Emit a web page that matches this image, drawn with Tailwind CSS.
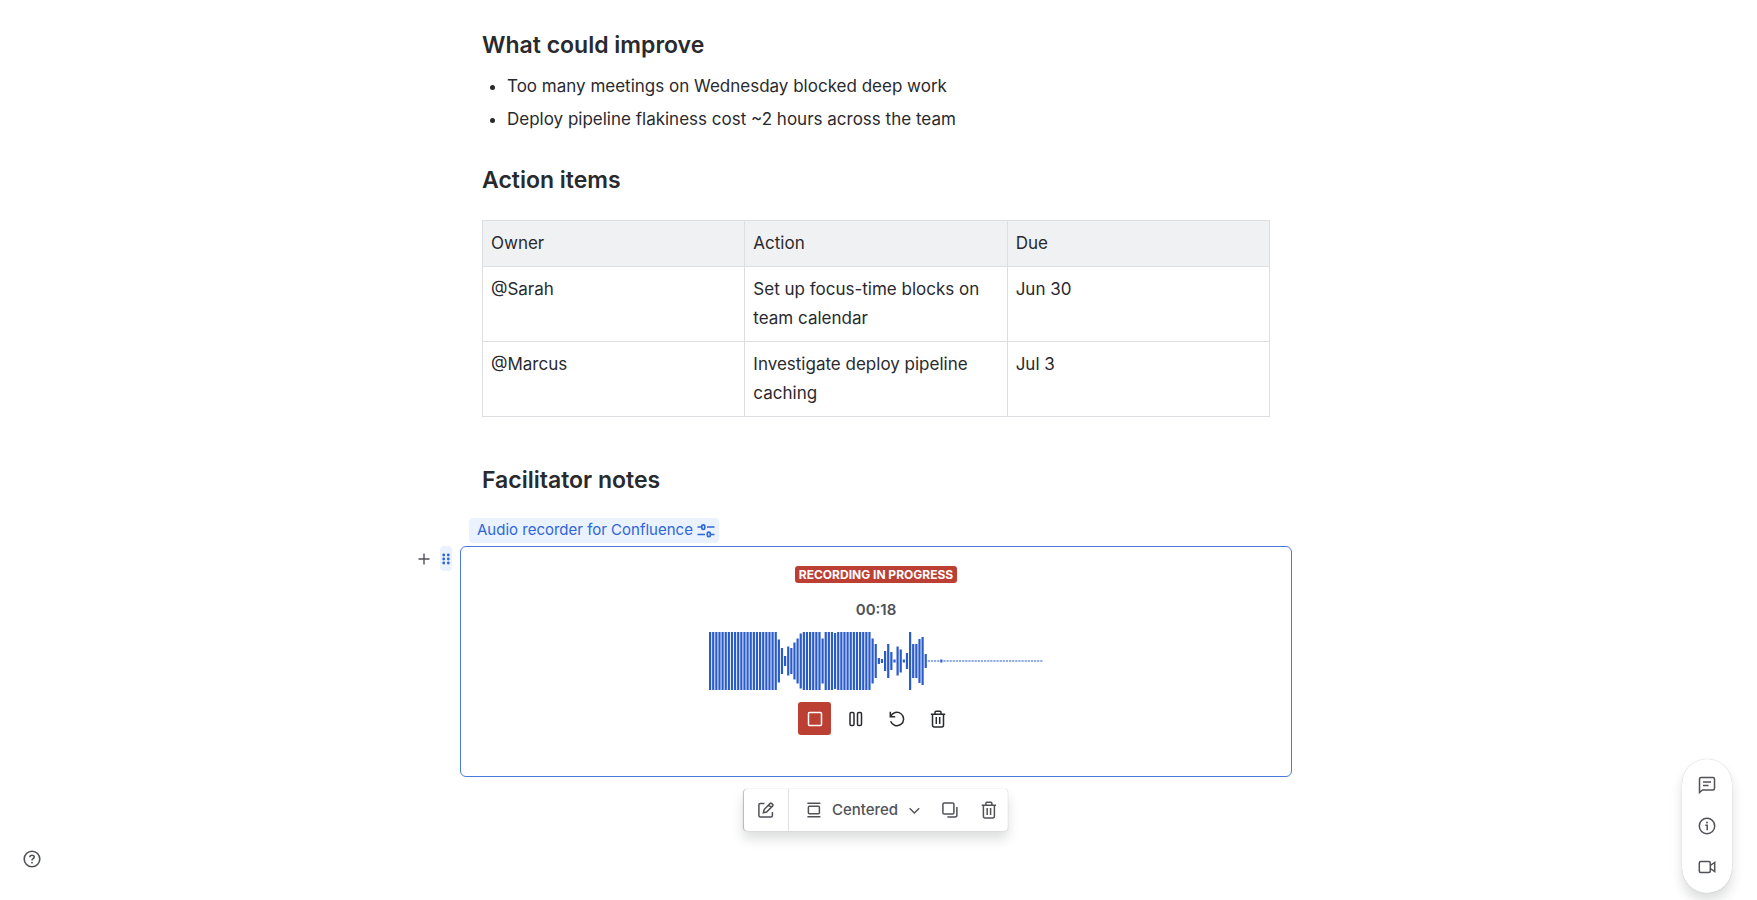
<!DOCTYPE html>
<html lang="en">
  <head>
    <meta charset="UTF-8" />
    <meta name="viewport" content="width=device-width, initial-scale=1.0" />
    <title>Retrospective</title>
    <script src="https://cdn.jsdelivr.net/npm/@tailwindcss/browser@4"></script>
  </head>
  <body class="font-['Inter',sans-serif] bg-white text-[#292a2e] min-h-screen pr-[5px]">
    <main class="w-full max-w-[832px] mx-auto pt-[29px] px-[22px]">
      <h2 class="text-[23px] leading-8 font-semibold">What could improve</h2>
      <ul class="list-disc pl-[25px] mt-[11px] text-[17px] leading-[29px]">
        <li>Too many meetings on Wednesday blocked deep work</li>
        <li class="mt-1">Deploy pipeline flakiness cost ~2 hours across the team</li>
      </ul>

      <h2 class="text-[23px] leading-8 font-semibold mt-[30px]">Action items</h2>
      <table class="w-full table-fixed border-collapse mt-6 text-[17px] leading-[29px] text-left">
        <thead>
          <tr class="bg-[#f0f1f2]">
            <th class="border border-[#dddee1] p-2 font-normal">Owner</th>
            <th class="border border-[#dddee1] p-2 font-normal">Action</th>
            <th class="border border-[#dddee1] p-2 font-normal">Due</th>
          </tr>
        </thead>
        <tbody class="align-top">
          <tr>
            <td class="border border-[#dddee1] p-2">@Sarah</td>
            <td class="border border-[#dddee1] p-2">Set up focus-time blocks on team calendar</td>
            <td class="border border-[#dddee1] p-2">Jun 30</td>
          </tr>
          <tr>
            <td class="border border-[#dddee1] p-2">@Marcus</td>
            <td class="border border-[#dddee1] p-2">Investigate deploy pipeline caching</td>
            <td class="border border-[#dddee1] p-2">Jul 3</td>
          </tr>
        </tbody>
      </table>

      <h2 class="text-[23px] leading-8 font-semibold mt-[47px]">Facilitator notes</h2>

      <!-- recorder macro -->
      <div class="-mx-[22px] mt-[22px] relative">
        <button class="ml-[9px] h-[25px] pl-2 pr-1 rounded bg-[#e9f2fe] text-[#2f66d8] text-[15px] flex items-center gap-1">
          Audio recorder for Confluence
          <svg class="w-[18px] h-[18px]" viewBox="0 0 18 18" fill="none" stroke="currentColor" stroke-width="1.700"><path d="M0.500 5H4M10 5H17.500M0.500 12.500H8M13.500 12.500H17.500" /><rect x="4.800" y="2.800" width="3" height="4.500" rx="1.400" /><rect x="10.300" y="10.200" width="3" height="4.500" rx="1.400" /></svg>
        </button>
        <div class="absolute top-[28px] -left-[46px] flex items-center gap-[7px]">
          <button aria-label="Insert" class="w-[19px] h-[25px] flex items-center justify-center text-[#505258]">
            <svg class="w-3 h-3" viewBox="0 0 12 12" stroke="currentColor" stroke-width="1.400"><path d="M6 0.500V11.500M0.500 6H11.500" /></svg>
          </button>
          <button aria-label="Drag" class="w-3 h-[25px] rounded bg-[#e9f2fe] flex items-center justify-center text-[#2f66d8]">
            <svg class="w-2 h-3" viewBox="0 0 8 12" fill="currentColor"><circle cx="1.700" cy="2" r="1.400" /><circle cx="6.300" cy="2" r="1.400" /><circle cx="1.700" cy="6" r="1.400" /><circle cx="6.300" cy="6" r="1.400" /><circle cx="1.700" cy="10" r="1.400" /><circle cx="6.300" cy="10" r="1.400" /></svg>
          </button>
        </div>
        <section class="mt-[3px] h-[231px] rounded-md border border-[#4a7bdb] flex flex-col items-center pt-[19px]">
          <p class="h-[17px] px-1 rounded-[3px] bg-[#bb4033] text-white text-xs leading-[17px] font-bold">RECORDING IN PROGRESS</p>
          <p class="mt-[17px] text-[15px] leading-5 font-semibold text-[#505258]">00:18</p>
          <svg id="wave" class="mt-3 w-[334px] h-[58px]" viewBox="0 0 334 58" fill="#2a5bcb"></svg>
          <div class="mt-3 flex gap-2">
            <button aria-label="Stop" class="w-[33px] h-[33px] rounded-[3px] bg-[#bb4033] text-white flex items-center justify-center">
              <svg class="w-4 h-4" viewBox="0 0 16 16" fill="none" stroke="currentColor" stroke-width="1.500"><rect x="1.500" y="1.500" width="13" height="13" rx="1" /></svg>
            </button>
            <button aria-label="Pause" class="w-[33px] h-[33px] flex items-center justify-center">
              <svg class="w-4 h-4" viewBox="0 0 16 16" fill="none" stroke="currentColor" stroke-width="1.500"><rect x="2" y="1.500" width="4" height="13" rx="1.300" /><rect x="9.500" y="1.500" width="4" height="13" rx="1.300" /></svg>
            </button>
            <button aria-label="Restart" class="w-[33px] h-[33px] flex items-center justify-center">
              <svg class="w-4 h-4" viewBox="0 0 16 16" fill="none" stroke="currentColor" stroke-width="1.500"><path d="M1.300 0.800V5.700H6.200M1.700 5.500A6.700 6.700 0 1 1 1.600 10.300" /></svg>
            </button>
            <button aria-label="Discard" class="w-[33px] h-[33px] flex items-center justify-center">
              <svg class="w-[18px] h-[18px]" viewBox="0 0 18 18" fill="none" stroke="currentColor" stroke-width="1.500"><path d="M1.800 4.200H16.200M6 4V2.500Q6 1.300 7 1.300H11Q12 1.300 12 2.500V4M3.500 4.200V15Q3.500 17 5.200 17H12.800Q14.500 17 14.500 15V4.200M7.300 7V14M10.700 7V14" /></svg>
            </button>
          </div>
        </section>

        <div class="absolute top-full left-1/2 -translate-x-1/2 mt-3 h-[42px] rounded bg-white shadow-[0_8px_12px_rgba(30,31,33,0.15),0_0_1px_rgba(30,31,33,0.31)] flex items-center text-[#505258]">
          <button aria-label="Edit" class="w-[45px] h-full flex items-center justify-center border-r border-[#dddee1]">
            <svg class="w-4 h-4" viewBox="0 0 16 16" fill="none" stroke="currentColor" stroke-width="1.500"><path d="M6.500 1.500H2.500Q1 1.500 1 3V13.500Q1 15 2.500 15H13Q14.500 15 14.500 13.500V10M5.500 10.700L6.200 7.500L12.300 1.400Q13 0.800 13.700 1.400L14.800 2.500Q15.400 3.200 14.800 3.900L8.700 10Z M10.800 3L13.200 5.400" /></svg>
          </button>
          <button class="h-full pl-[18px] pr-[10px] flex items-center gap-[11px] text-[15px] font-medium">
            <svg class="w-[14px] h-4" viewBox="0 0 14 16" fill="none" stroke="currentColor" stroke-width="1.500"><path d="M0.500 1.300H13.500M0.500 14.700H13.500" /><rect x="1.500" y="4.300" width="11" height="7.400" rx="1" /></svg>
            Centered
            <svg class="w-[11px] h-[11px]" viewBox="0 0 11 11" fill="none" stroke="currentColor" stroke-width="1.400"><path d="M0.700 3.200L5.500 8L10.300 3.200" /></svg>
          </button>
          <button aria-label="Copy" class="w-[39px] h-full flex items-center justify-center">
            <svg class="w-4 h-4" viewBox="0 0 16 16" fill="none" stroke="currentColor" stroke-width="1.500"><rect x="1" y="1" width="11" height="11" rx="1.300" /><path d="M15 5V13Q15 15 13 15H5.500" /></svg>
          </button>
          <button aria-label="Delete" class="w-[39px] h-full flex items-center justify-center">
            <svg class="w-[18px] h-[18px]" viewBox="0 0 18 18" fill="none" stroke="currentColor" stroke-width="1.500"><path d="M1.800 4.200H16.200M6 4V2.500Q6 1.300 7 1.300H11Q12 1.300 12 2.500V4M3.500 4.200V15Q3.500 17 5.200 17H12.800Q14.500 17 14.500 15V4.200M7.300 7V14M10.700 7V14" /></svg>
          </button>
        </div>
      </div>
    </main>

    <button aria-label="Help" class="fixed left-[22px] bottom-[31px] w-5 h-5 flex items-center justify-center text-[#505258]">
      <svg class="w-[18px] h-[18px]" viewBox="0 0 18 18" fill="none" stroke="currentColor" stroke-width="1.600"><circle cx="9" cy="9" r="7.800" /><path d="M6.900 7.200Q6.900 5.200 9 5.200Q11.200 5.200 11.200 7.100Q11.200 8.200 10 8.800Q9 9.300 9 10.400" /><circle cx="9" cy="12.700" r="0.900" fill="currentColor" stroke="none" /></svg>
    </button>

    <!-- side actions -->
    <nav class="fixed right-[25px] bottom-[7px] w-[50px] py-[17px] rounded-full bg-white shadow-[0_8px_12px_rgba(30,31,33,0.15),0_0_1px_rgba(30,31,33,0.31)] flex flex-col items-center gap-[23px] text-[#505258]">
      <button aria-label="Comments"><svg class="w-[18px] h-[18px]" viewBox="0 0 18 18" fill="none" stroke="currentColor" stroke-width="1.500"><path d="M1.500 16.500V3Q1.500 1.500 3 1.500H15Q16.500 1.500 16.500 3V12.500Q16.500 14 15 14H4.500ZM5 6H13M5 9.500H10.500" /></svg></button>
      <button aria-label="Details"><svg class="w-[18px] h-[18px]" viewBox="0 0 18 18" fill="none" stroke="currentColor" stroke-width="1.500"><circle cx="9" cy="9" r="7.700" /><path d="M7.300 8.200H9.200V13.200" /><circle cx="9" cy="5.500" r="1" fill="currentColor" stroke="none" /></svg></button>
      <button aria-label="Record video"><svg class="w-[18px] h-[18px]" viewBox="0 0 18 18" fill="none" stroke="currentColor" stroke-width="1.500"><rect x="1.300" y="3.500" width="11" height="11" rx="1.500" /><path d="M12.300 7.500L16.700 4.500V13.500L12.300 10.500" /></svg></button>
    </nav>

    <script>
      // bar heights in px, the rest of the track is silence
      const full = (n) => Array(n).fill(58);
      const bars = [...full(22), 43, 26, 10, 29, 26, 37, 45, 55, ...full(6), 45, ...full(3), 56, ...full(11), 45, 34, 6, 4, 20, 34, 18, 3, 29, 23, 3, 16, 58, 34, 34, 44, 48, 14, 1, 1, 1, 1, 3];
      const wave = document.getElementById("wave");
      for (let i = 0; i < 107; i++) {
        const h = bars[i] || 1;
        const bar = document.createElementNS("http://www.w3.org/2000/svg", "rect");
        bar.setAttribute("x", i * 3.125);
        bar.setAttribute("y", 29 - h / 2);
        bar.setAttribute("width", 2.2);
        bar.setAttribute("height", h);
        wave.append(bar);
      }
    </script>
  </body>
</html>
